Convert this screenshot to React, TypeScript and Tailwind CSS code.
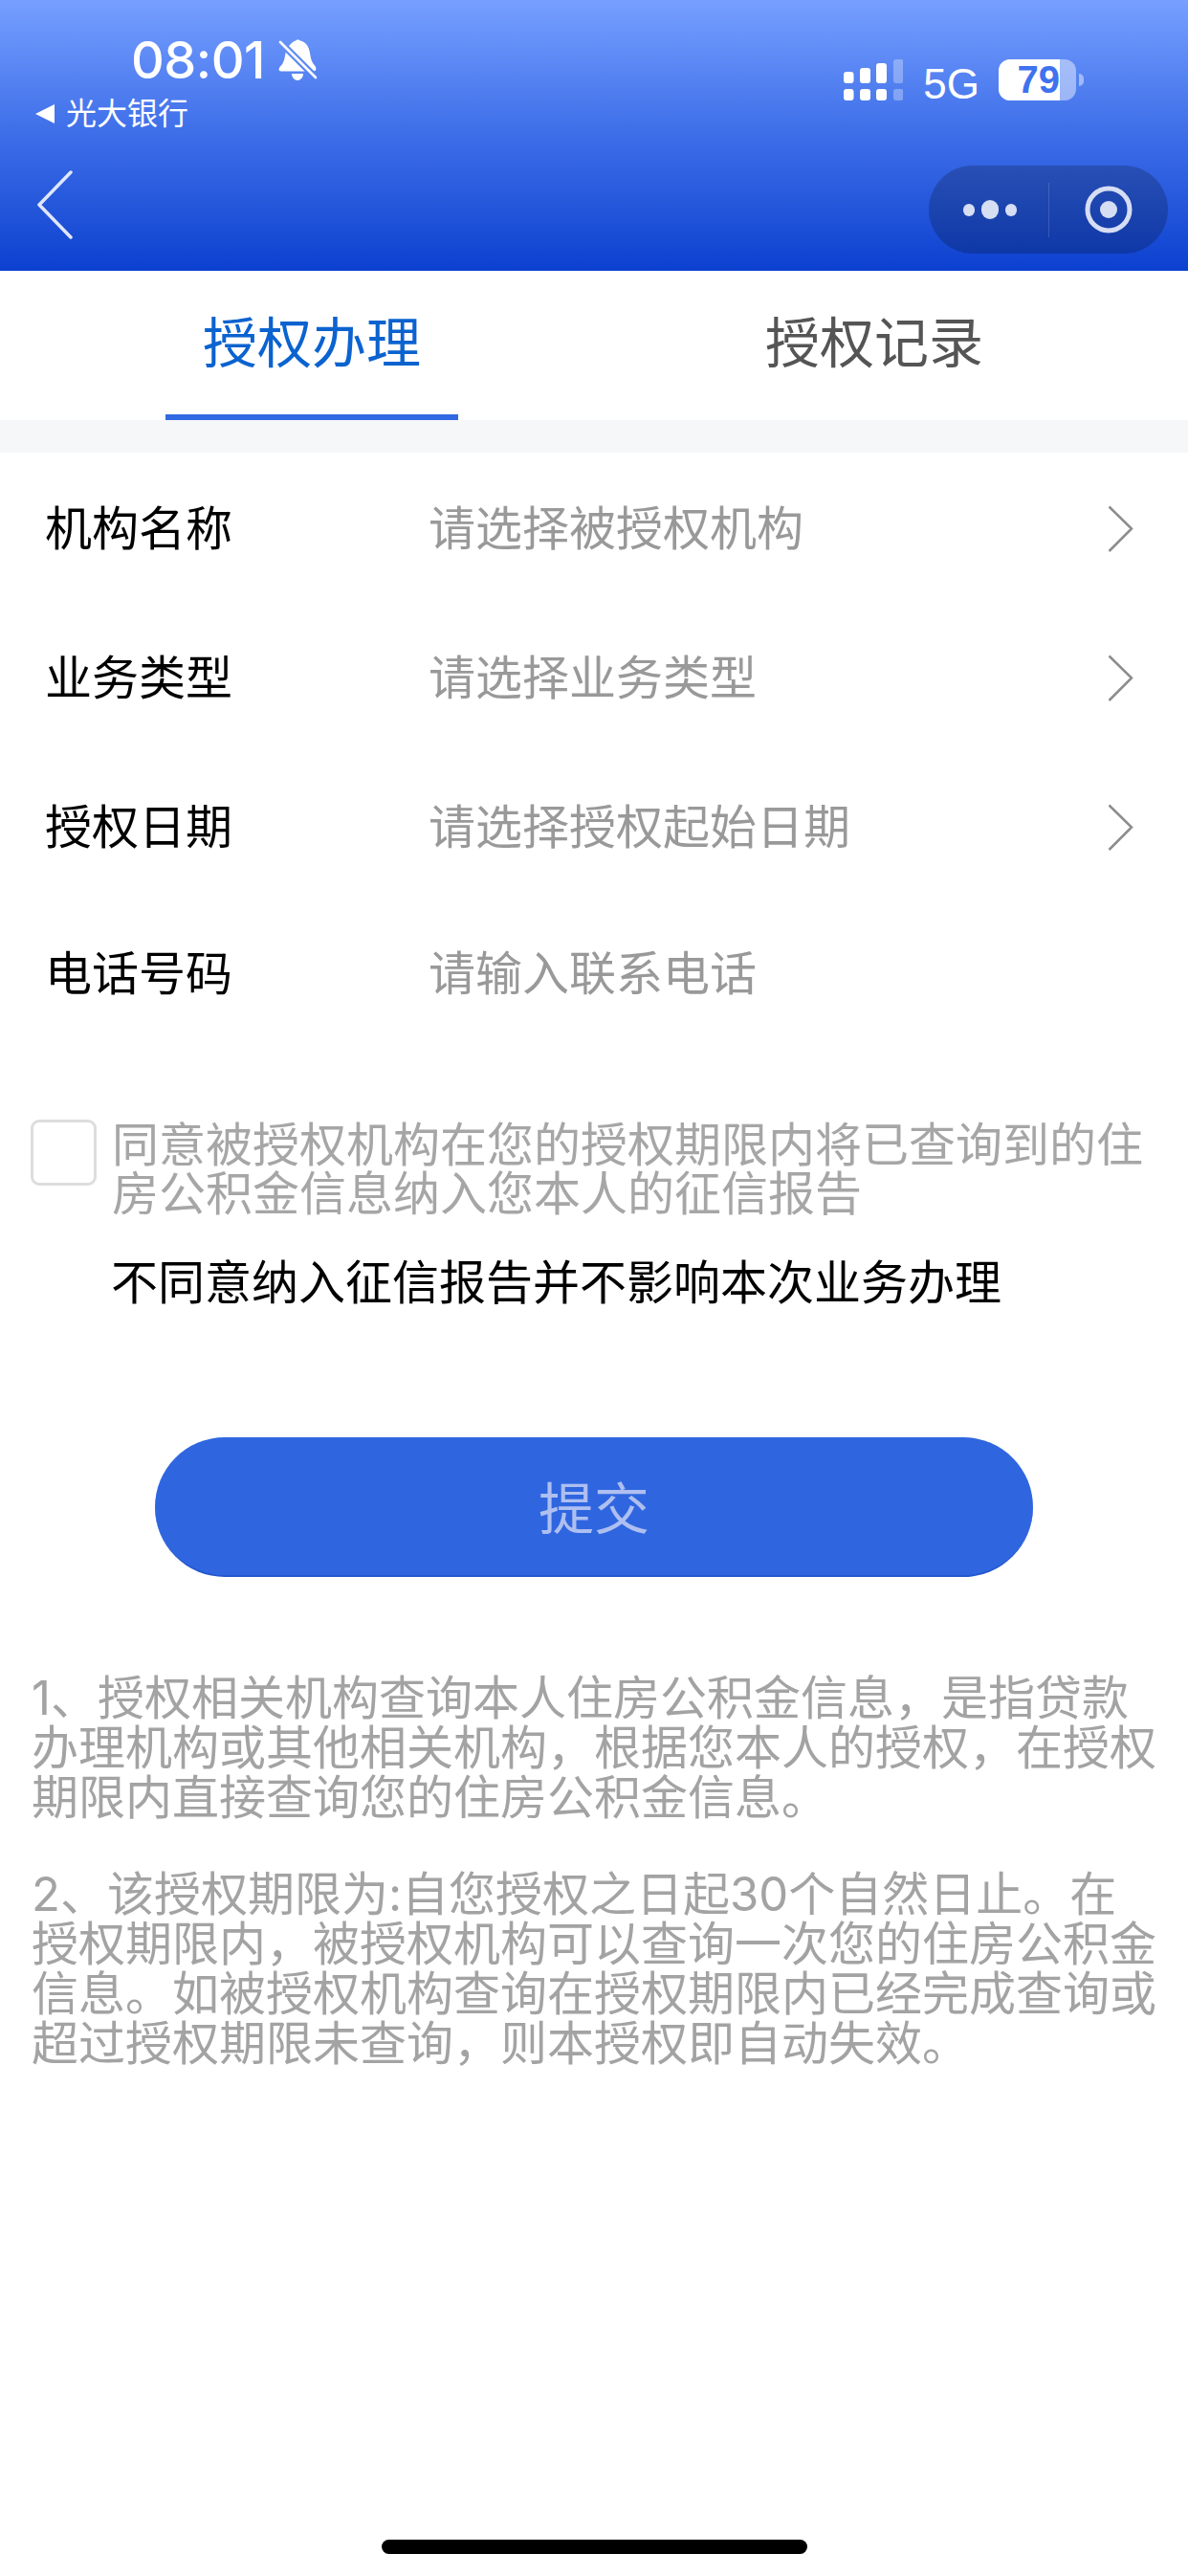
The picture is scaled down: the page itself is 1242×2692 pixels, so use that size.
const cjk = "font-['Inter','Noto_Sans_CJK_SC',sans-serif]";

function Bell() {
  return (
    <svg width="41" height="44" viewBox="0 0 41 44" className="shrink-0">
      <defs>
        <mask id="bell-cut">
          <rect width="41" height="44" fill="white" />
          <path d="M2 3 L39 40" stroke="black" strokeWidth="7" />
        </mask>
      </defs>
      <g mask="url(#bell-cut)" fill="white">
        <path d="M18 1.500c1-1.500 4-1.500 5 0 6 1.500 9 6 10 13 1 6 2 10 5 13 2 2 2 6-1 6H3c-3 0-3-3-1-5 3-3 4-6 5-11 .5-3 1-6 3-9 2-3 5-6 8-7z" />
        <path d="M14 36h12c0 4-3 7-6 7s-6-3-6-7z" />
      </g>
      <path d="M2 3 L39 40" stroke="white" strokeWidth="2.6" strokeLinecap="round" />
    </svg>
  );
}

function Signal() {
  return (
    <svg width="62" height="43" viewBox="0 0 62 43" fill="white" className="shrink-0">
      <rect x="0" y="13" width="10.500" height="12" rx="3" />
      <rect x="17" y="9" width="11" height="16" rx="3" />
      <rect x="34" y="4" width="11" height="21" rx="3" />
      <rect x="52" y="0" width="10.500" height="25" rx="3" opacity="0.3" />
      <rect x="0" y="31" width="10.500" height="12" rx="3" />
      <rect x="17" y="31" width="11" height="12" rx="3" />
      <rect x="34" y="31" width="11" height="12" rx="3" />
      <rect x="52" y="31" width="10.500" height="12" rx="3" opacity="0.3" />
    </svg>
  );
}

function Chevron() {
  return (
    <svg width="27" height="50" viewBox="0 0 27 50" fill="none" className="shrink-0">
      <path d="M1.500 1.500 L25 24.500 L1.500 48" stroke="#8c8c8c" strokeWidth="2.500" />
    </svg>
  );
}

const rows = [
  { label: "机构名称", hint: "请选择被授权机构", arrow: true, h: "h-[156px]" },
  { label: "业务类型", hint: "请选择业务类型", arrow: true, h: "h-[156px]" },
  { label: "授权日期", hint: "请选择授权起始日期", arrow: true, h: "h-[156px]" },
  { label: "电话号码", hint: "请输入联系电话", arrow: false, h: "h-[150px]" },
];

const noteOne = [
  "1、授权相关机构查询本人住房公积金信息，是指贷款",
  "办理机构或其他相关机构，根据您本人的授权，在授权",
  "期限内直接查询您的住房公积金信息。",
];
const noteTwo = [
  "2、该授权期限为:自您授权之日起30个自然日止。在",
  "授权期限内，被授权机构可以查询一次您的住房公积金",
  "信息。如被授权机构查询在授权期限内已经完成查询或",
  "超过授权期限未查询，则本授权即自动失效。",
];

export default function App() {
  return (
    <div className={`flex min-h-[2692px] w-[1242px] flex-col bg-white ${cjk}`}>
      <header className="flex h-[283px] flex-col bg-gradient-to-b from-[#769fff] via-[#3d6de8] to-[#0b40cf] text-white">
        <div className="flex h-[173px] justify-between">
          <div className="flex flex-col pt-[37px]">
            <div className="flex items-center gap-[14px] pl-[137px]">
              <span className="text-[54px] font-medium leading-[52px] tracking-[-0.5px]">08:01</span>
              <Bell />
            </div>
            <div className="mt-[10px] flex h-[40px] items-center gap-[12px] pl-[37px]">
              <svg width="20" height="20" viewBox="0 0 20 20" fill="white" className="shrink-0">
                <path d="M20 0V20L0 10z" />
              </svg>
              <span className="text-[32px] leading-[40px]">光大银行</span>
            </div>
          </div>
          <div className="flex items-start pr-[109px] pt-[62px]">
            <Signal />
            <span className="ml-[21px] mt-[4px] font-['Liberation_Sans',sans-serif] text-[44px] leading-[44px]">5G</span>
            <div className="ml-[20px] flex items-center gap-[3px]">
              <div className="flex h-[43px] w-[81px] overflow-hidden rounded-[12px] bg-white/45">
                <div className="flex h-full w-[64px] items-center justify-end bg-white">
                  <span className="font-['Liberation_Sans',sans-serif] text-[40px] font-bold leading-[43px] text-[#3f72ee]">79</span>
                </div>
              </div>
              <div className="h-[13px] w-[5px] rounded-r-full bg-white/45" />
            </div>
          </div>
        </div>
        <div className="flex h-[92px] items-center justify-between pl-[38px] pr-[21px]">
          <svg width="38" height="72" viewBox="0 0 38 72" fill="none" className="mb-[11px]">
            <path d="M36 2 L3 36 L36 70" stroke="#dfe7fb" strokeWidth="3.500" strokeLinecap="round" strokeLinejoin="round" />
          </svg>
          <div className="flex h-[92px] w-[250px] items-center rounded-full bg-black/20">
            <div className="flex h-full w-[125px] items-center justify-center gap-[7px] pl-[2px]">
              <span className="h-[13px] w-[12px] rounded-full bg-[#d6def4]" />
              <span className="h-[20px] w-[18px] rounded-full bg-[#d6def4]" />
              <span className="h-[13px] w-[12px] rounded-full bg-[#d6def4]" />
            </div>
            <div className="h-[57px] w-px bg-white/15" />
            <div className="flex flex-1 items-center justify-center pr-[1px]">
              <svg width="50" height="50" viewBox="0 0 50 50">
                <circle cx="25" cy="25" r="22" fill="none" stroke="#d6def4" strokeWidth="5" />
                <circle cx="25" cy="25" r="9" fill="#d6def4" />
              </svg>
            </div>
          </div>
        </div>
      </header>

      <nav className="flex h-[156px] pl-[173px]">
        <div className="flex w-[306px] flex-col items-center justify-center border-b-[6px] border-[#3169e2] pt-[2px] text-[57px] leading-[64px] text-[#0b63cf]">
          授权办理
        </div>
        <div className="ml-[282px] flex w-[306px] flex-col items-center justify-center pb-[4px] text-[57px] leading-[64px] text-[#555555]">
          授权记录
        </div>
      </nav>
      <div className="h-[34px] bg-[#f6f7f9]" />

      <section className="flex flex-col pt-[2px] text-[49px] leading-[60px]">
        {rows.map((r) => (
          <div key={r.label} className={`flex items-center pl-[47px] pr-[57px] ${r.h}`}>
            <span className="w-[401px] text-black">{r.label}</span>
            <span className="flex-1 text-[#999999]">{r.hint}</span>
            {r.arrow && <Chevron />}
          </div>
        ))}
      </section>

      <section className="mt-[77px] flex pl-[32px]">
        <div className="h-[69px] w-[69px] shrink-0 rounded-[9px] border-[3px] border-[#dddddd]" />
        <p className="ml-[16px] w-[1090px] pt-[1px] text-[49px] leading-[51px] text-[#a6a6a6]">
          <span className="block whitespace-nowrap">同意被授权机构在您的授权期限内将已查询到的住</span>
          <span className="block whitespace-nowrap">房公积金信息纳入您本人的征信报告</span>
        </p>
      </section>
      <p className="mt-[42px] pl-[116px] text-[49px] leading-[52px] text-black">不同意纳入征信报告并不影响本次业务办理</p>

      <button className="mx-auto mt-[135px] h-[146px] w-[918px] rounded-full border-b-[2px] border-[#2457cf] bg-[#2f66e0] pt-[6px] text-[58px] leading-[64px] text-[#aebff0]">
        提交
      </button>

      <section className="mt-[101px] flex flex-col gap-[49px] pl-[33px] text-[49px] leading-[52px] text-[#a3a3a3]">
        <p>
          {noteOne.map((l) => (
            <span key={l} className="block whitespace-nowrap">{l}</span>
          ))}
        </p>
        <p>
          {noteTwo.map((l) => (
            <span key={l} className="block whitespace-nowrap">{l}</span>
          ))}
        </p>
      </section>

      <div className="mx-auto mb-[23px] mt-auto h-[15px] w-[445px] rounded-full bg-black" />
    </div>
  );
}
